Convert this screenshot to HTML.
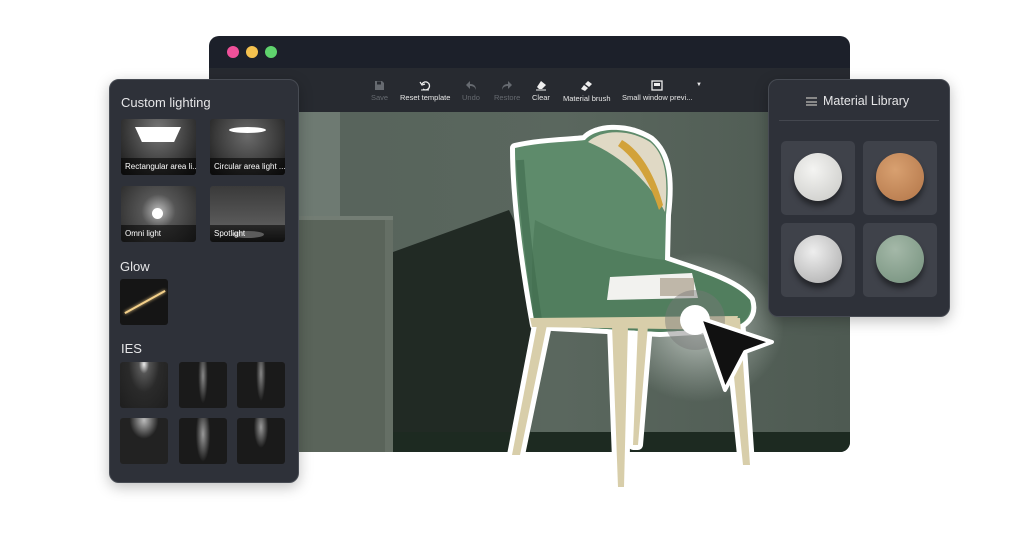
<!DOCTYPE html><html><head><meta charset="utf-8"><style>
*{margin:0;padding:0;box-sizing:border-box}
body{width:1020px;height:558px;background:#fff;position:relative;overflow:hidden;font-family:"Liberation Sans",sans-serif}
.abs{position:absolute}
.win{left:209px;top:36px;width:641px;height:416px;border-radius:10px;overflow:hidden;background:#1c202a}
.dot{position:absolute;top:10px;width:12px;height:12px;border-radius:50%}
.tb{position:absolute;left:0;top:32px;width:641px;height:44px;background:#272a30}
.ti{position:absolute;top:12px;font-size:7.5px;color:#e8e8e8;text-align:center;white-space:nowrap}
.ti.d{color:#666a70}
.ti svg{display:block;margin:0 auto 2px}
.panel{background:#2e3139;border:1px solid #474b53;border-radius:10px;box-shadow:0 4px 14px rgba(0,0,0,.25)}
.h{position:absolute;color:#e6e6e8;font-size:13px}
.th{position:absolute;border-radius:3px;overflow:hidden;background:#111}
.th span{position:absolute;left:0;bottom:0;width:100%;height:17px;background:rgba(0,0,0,.55);color:#fff;font-size:8px;line-height:17px;padding-left:4px;white-space:nowrap}
.ies{position:absolute;width:48px;height:46px;border-radius:3px;background:#1a1a1b;overflow:hidden}
.m{position:absolute;width:74px;height:74px;background:#3f424a;border-radius:5px}
.m i{position:absolute;left:13px;top:12px;width:48px;height:48px;border-radius:50%;box-shadow:0 5px 6px rgba(0,0,0,.45)}
</style></head><body>
<div class="abs win">
 <div class="dot" style="left:18px;background:#f0509a"></div>
 <div class="dot" style="left:37px;background:#f5c24f"></div>
 <div class="dot" style="left:56px;background:#5fd36d"></div>
 <div class="tb">
  <div class="ti d" style="left:162px"><svg width="11" height="11" viewBox="0 0 11 11"><path d="M1 1h7l2 2v7H1z" fill="#666a70"/><rect x="3" y="1.5" width="4" height="3" fill="#272a30"/></svg>Save</div>
  <div class="ti" style="left:191px"><svg width="12" height="11" viewBox="0 0 12 11"><path d="M3 4a4 4 0 1 1 1 5" stroke="#eee" fill="none" stroke-width="1.3"/><path d="M1 2l2 3 3-1" stroke="#eee" fill="none" stroke-width="1.2"/><path d="M2 10h8" stroke="#eee"/></svg>Reset template</div>
  <div class="ti d" style="left:253px"><svg width="12" height="11" viewBox="0 0 12 11"><path d="M5 1L1 5l4 4V6c3 0 5 1 6 4 0-4-2-6-6-6z" fill="#666a70"/></svg>Undo</div>
  <div class="ti d" style="left:285px"><svg width="12" height="11" viewBox="0 0 12 11"><path d="M7 1l4 4-4 4V6C4 6 2 7 1 10c0-4 2-6 6-6z" fill="#666a70"/></svg>Restore</div>
  <div class="ti" style="left:323px"><svg width="12" height="11" viewBox="0 0 12 11"><path d="M6 1l5 4-4 4H4L2 7z" fill="#eee"/><path d="M1 10h10" stroke="#eee"/></svg>Clear</div>
  <div class="ti" style="left:354px"><svg width="13" height="12" viewBox="0 0 13 12"><path d="M8 1l4 3-3 3-4-3zM4 5l4 3-3 3-4-2z" fill="#eee"/></svg>Material brush</div>
  <div class="ti" style="left:413px"><svg width="12" height="11" viewBox="0 0 12 11"><rect x="1" y="1" width="10" height="9" stroke="#eee" fill="none" stroke-width="1.3"/><rect x="3" y="3" width="6" height="3" fill="#eee"/></svg>Small window previ...</div>
  <div class="ti" style="left:487px;top:14px;font-size:6px">▼</div>
 </div>
 <svg class="abs" style="left:0;top:76px" width="641" height="340" viewBox="0 0 641 340">
  <defs>
   <linearGradient id="wall" x1="0" y1="0" x2="1" y2="0"><stop offset="0" stop-color="#56625a"/><stop offset=".55" stop-color="#5a675e"/><stop offset="1" stop-color="#4e5a52"/></linearGradient>
   <radialGradient id="glow" cx=".5" cy=".5" r=".5"><stop offset="0" stop-color="#dfe6e0" stop-opacity=".75"/><stop offset="1" stop-color="#c9d3cc" stop-opacity="0"/></radialGradient>
  </defs>
  <rect width="641" height="340" fill="url(#wall)"/>
  <path d="M184 140L300 98L330 160L320 340H184z" fill="#212a24"/>
  <rect x="89" y="0" width="42" height="110" fill="#6e7a72"/>
  <rect x="89" y="106" width="95" height="234" fill="#5a645a"/>
  <rect x="176" y="106" width="8" height="234" fill="#656f65"/>
  <rect x="89" y="104" width="95" height="4" fill="#737d74"/>
  <rect x="184" y="320" width="457" height="20" fill="#1d2a21"/>
  <ellipse cx="490" cy="215" rx="85" ry="75" fill="url(#glow)"/>
 </svg>
</div>

<!-- chair -->
<svg class="abs" style="left:500px;top:120px" width="300" height="380" viewBox="0 0 300 380">
 <defs>
  <g id="legs">
   <path d="M38 200L48 200 20 335 12 335z"/>
   <path d="M112 205L128 205 124 367 118 367z"/>
   <path d="M138 205L148 205 138 325 133 325z"/>
   <path d="M228 198L240 198 250 345 243 345z"/>
  </g>
  <path id="body" d="M15 28C40 22 70 22 85 20C95 8 125 5 150 20C168 35 170 60 166 95L165 140C190 150 235 160 250 180C255 195 245 205 230 208L160 212L125 210L35 205C25 150 15 80 15 28z"/>
 </defs>
 <g stroke="#fff" stroke-width="10" stroke-linejoin="round" fill="#fff">
  <use href="#body"/><use href="#legs"/>
 </g>
 <use href="#body" fill="#5e8b6b"/>
 <path d="M35 100C70 118 120 135 165 140 195 150 235 162 250 180 252 195 245 205 230 208L160 212 125 210 35 205C30 170 32 130 35 100z" fill="#517e5e"/>
 <path d="M20 40C25 110 32 160 38 200" stroke="#3f6a4c" stroke-width="8" fill="none" opacity=".6"/>
 <g fill="#d8ceaa"><use href="#legs"/></g>
 <path d="M30 198L238 196 234 210 32 207z" fill="#d8ceaa"/>
 <path d="M88 22C100 10 128 8 150 22 167 36 168 62 165 92 150 62 120 35 88 22z" fill="#e0d9c5"/>
 <path d="M122 20C140 30 155 55 163 85L159 90C150 62 135 38 118 26z" fill="#d2a23a"/>
 <path d="M110 157L192 153 198 178 107 180z" fill="#f2f2ef"/>
 <rect x="160" y="158" width="34" height="18" fill="#9c907a" opacity=".6"/>
</svg>
<!-- cursor -->
<svg class="abs" style="left:660px;top:285px" width="120" height="110" viewBox="0 0 120 110">
 <circle cx="35" cy="35" r="30" fill="#777" opacity=".45"/>
 <circle cx="35" cy="35" r="15" fill="#fff"/>
 <path d="M40 33L112 57 85 67 65 105z" fill="#111" stroke="#fff" stroke-width="4" stroke-linejoin="round"/>
</svg>

<!-- left panel -->
<div class="abs panel" style="left:109px;top:79px;width:190px;height:404px">
 <div class="h" style="left:11px;top:15px">Custom lighting</div>
 <div class="th" style="left:11px;top:39px;width:75px;height:56px;background:radial-gradient(ellipse at 50% 20%,#777 0,#3a3a3a 60%,#161616 100%)">
  <div class="abs" style="left:14px;top:8px;width:46px;height:15px;background:#fff;clip-path:polygon(0 0,100% 0,85% 100%,15% 100%)"></div><span>Rectangular area li...</span></div>
 <div class="th" style="left:100px;top:39px;width:75px;height:56px;background:radial-gradient(ellipse at 50% 30%,#6a6a6a 0,#3a3a3a 60%,#161616 100%)">
  <div class="abs" style="left:19px;top:8px;width:37px;height:6px;border-radius:50%;background:#fff"></div><span>Circular area light ...</span></div>
 <div class="th" style="left:11px;top:106px;width:75px;height:56px;background:radial-gradient(circle at 50% 45%,#bbb 0,#555 35%,#2a2a2a 100%)">
  <div class="abs" style="left:31px;top:22px;width:11px;height:11px;border-radius:50%;background:#fff"></div><span>Omni light</span></div>
 <div class="th" style="left:100px;top:106px;width:75px;height:56px;background:linear-gradient(#3a3a3a,#5a5a5a 70%,#222)">
  <div class="abs" style="left:22px;top:45px;width:32px;height:7px;border-radius:50%;background:#ccc"></div><span>Spotlight</span></div>
 <div class="h" style="left:10px;top:179px">Glow</div>
 <div class="th" style="left:10px;top:199px;width:48px;height:46px;background:#151515">
  <div class="abs" style="left:2px;top:22px;width:46px;height:2px;background:#f3d08a;transform:rotate(-29deg);box-shadow:0 0 3px #f3d08a"></div></div>
 <div class="h" style="left:11px;top:261px">IES</div>
 <div class="ies" style="left:10px;top:282px;background:radial-gradient(ellipse at 50% 5%,#eee 0,#555 15%,#2a2a2a 45%,#1e1e1e 100%)"></div>
 <div class="ies" style="left:69px;top:282px;background:radial-gradient(ellipse 10% 60% at 50% 30%,#888 0,#1a1a1a 100%)"></div>
 <div class="ies" style="left:127px;top:282px;background:radial-gradient(ellipse 10% 60% at 50% 25%,#888 0,#1a1a1a 100%)"></div>
 <div class="ies" style="left:10px;top:338px;background:radial-gradient(ellipse 30% 40% at 50% 5%,#bbb 0,#222 100%)"></div>
 <div class="ies" style="left:69px;top:338px;background:radial-gradient(ellipse 15% 60% at 50% 35%,#999 0,#1a1a1a 100%)"></div>
 <div class="ies" style="left:127px;top:338px;background:radial-gradient(ellipse 15% 45% at 50% 20%,#999 0,#1a1a1a 100%)"></div>
</div>

<!-- material -->
<div class="abs panel" style="left:768px;top:79px;width:182px;height:238px">
 <div class="abs" style="left:37px;top:17px;width:11px;height:9px;border-top:2px solid #888;border-bottom:2px solid #888"><div style="margin-top:1.5px;height:2px;background:#888"></div></div>
 <div class="h" style="left:54px;top:14px;font-size:12.5px">Material Library</div>
 <div class="abs" style="left:10px;top:40px;width:160px;height:1px;background:#44474f"></div>
 <div class="m" style="left:12px;top:61px"><i style="background:radial-gradient(circle at 40% 35%,#f4f4f2,#c8c8c5)"></i></div>
 <div class="m" style="left:94px;top:61px"><i style="background:radial-gradient(circle at 40% 35%,#d8a070,#b27548)"></i></div>
 <div class="m" style="left:12px;top:143px"><i style="background:radial-gradient(circle at 40% 35%,#eee,#a9a9a9)"></i></div>
 <div class="m" style="left:94px;top:143px"><i style="background:radial-gradient(circle at 40% 30%,#a4b8a8,#74907c)"></i></div>
</div>
</body></html>
